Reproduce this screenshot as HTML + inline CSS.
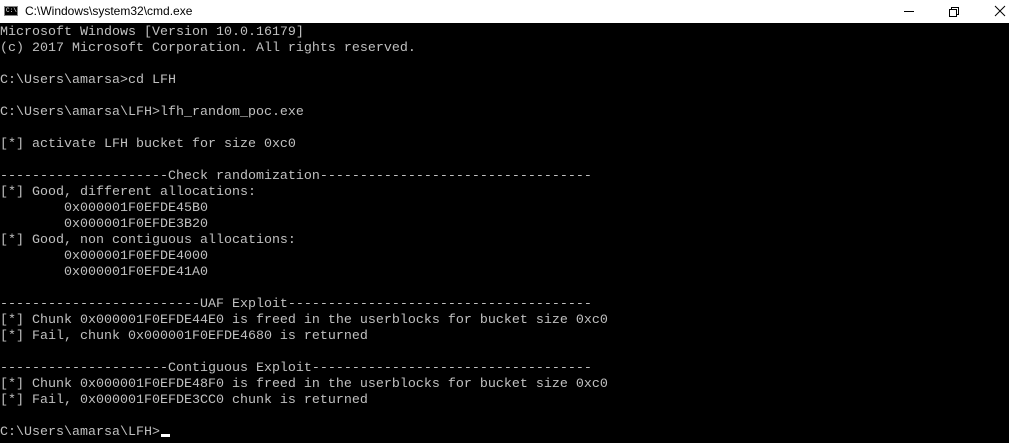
<!DOCTYPE html>
<html><head><style>
html,body{margin:0;padding:0;width:1009px;height:443px;overflow:hidden;background:#000}
#tb{position:absolute;left:0;top:0;width:1009px;height:23px;background:#fff;font-family:"Liberation Sans",sans-serif;font-size:12px;color:#000}
#tb .t{position:absolute;left:25px;top:4px}
#ico{position:absolute;left:4px;top:6px;width:14px;height:10px;background:#000;border:1px solid #888;box-sizing:border-box}
#ico span{position:absolute;left:1px;top:1px;font:6px "Liberation Mono",monospace;color:#fff;line-height:6px}
pre{position:absolute;left:0;top:25px;margin:0;font-family:"Liberation Mono",monospace;font-size:13.33px;line-height:16px;color:#c0c0c0}
#cur{position:absolute;left:161px;top:434px;width:9px;height:3px;background:#fff}
</style></head><body>
<div id="tb"><div id="ico"><span>C:\</span></div><div class="t">C:\Windows\system32\cmd.exe</div>
<svg style="position:absolute;left:880px;top:0" width="129" height="23">
<line x1="24" y1="11.5" x2="34" y2="11.5" stroke="#000"/>
<rect x="69.5" y="9.5" width="7" height="7" fill="none" stroke="#000"/>
<path d="M71.5 9.5V7.5H78.5V14.5H76.5" fill="none" stroke="#000"/>
<path d="M115 6L125 16M125 6L115 16" stroke="#000"/>
</svg></div>
<pre>Microsoft Windows [Version 10.0.16179]
(c) 2017 Microsoft Corporation. All rights reserved.

C:\Users\amarsa&gt;cd LFH

C:\Users\amarsa\LFH&gt;lfh_random_poc.exe

[*] activate LFH bucket for size 0xc0

---------------------Check randomization----------------------------------
[*] Good, different allocations:
        0x000001F0EFDE45B0
        0x000001F0EFDE3B20
[*] Good, non contiguous allocations:
        0x000001F0EFDE4000
        0x000001F0EFDE41A0

-------------------------UAF Exploit--------------------------------------
[*] Chunk 0x000001F0EFDE44E0 is freed in the userblocks for bucket size 0xc0
[*] Fail, chunk 0x000001F0EFDE4680 is returned

---------------------Contiguous Exploit-----------------------------------
[*] Chunk 0x000001F0EFDE48F0 is freed in the userblocks for bucket size 0xc0
[*] Fail, 0x000001F0EFDE3CC0 chunk is returned

C:\Users\amarsa\LFH&gt;</pre>
<div id="cur"></div>
</body></html>
